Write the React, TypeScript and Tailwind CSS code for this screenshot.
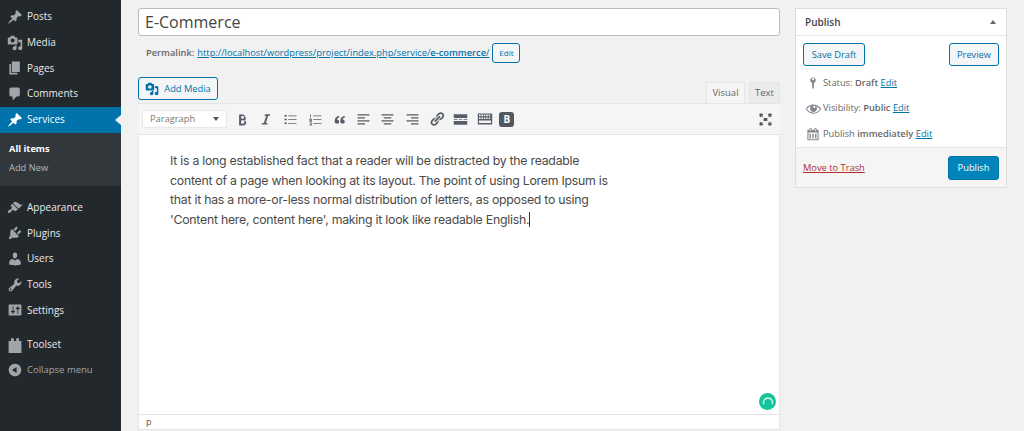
import React from "react";

const I = ({ d, c = "w-[16px] h-[16px]" }: { d: string; c?: string }) => (
  <svg viewBox="0 0 20 20" className={c} fill="currentColor"><path d={d} /></svg>
);

const P = {
  post: "M10.44 3.02l1.82-1.82 6.36 6.35-1.83 1.82c-1.05-.68-2.48-.57-3.41.36l-.75.75c-.92.93-1.04 2.35-.35 3.41l-1.83 1.82-2.41-2.41-2.8 2.79c-.42.42-3.38 2.71-3.8 2.29s1.86-3.39 2.28-3.81l2.79-2.79L4.1 9.36l1.83-1.82c1.05.69 2.48.57 3.4-.36l.75-.75c.93-.92 1.05-2.35.36-3.41z",
  media: "M13 11V4c0-.55-.45-1-1-1h-1.67L9 1H5L3.67 3H2c-.55 0-1 .45-1 1v7c0 .55.45 1 1 1h10c.55 0 1-.45 1-1zM7 4.5c1.38 0 2.5 1.12 2.5 2.5S8.38 9.5 7 9.5 4.5 8.38 4.5 7 5.62 4.5 7 4.5zM14 6h5v10.5c0 1.38-1.12 2.5-2.5 2.5S14 17.88 14 16.5s1.12-2.5 2.5-2.5c.17 0 .34.02.5.05V9h-3V6zm-4 8.05V13h2v3.5c0 1.38-1.12 2.5-2.5 2.5S7 17.88 7 16.5 8.12 14 9.5 14c.17 0 .34.02.5.05z",
  page: "M6 15V2h10v13H6zm-1 1h8v2H3V5h2v11z",
  comment: "M5 2h9c1.1 0 2 .9 2 2v7c0 1.1-.9 2-2 2h-2l-5 5v-5H5c-1.1 0-2-.9-2-2V4c0-1.1.9-2 2-2z",
  appearance: "M14.48 11.06L7.41 3.99l1.5-1.5c.5-.56 2.3-.47 3.51.32 1.21.8 1.43 1.28 2.91 2.1 1.18.64 2.45 1.26 4.45.85zm-.71.71L6.7 4.7 4.93 6.47c-.39.39-.39 1.02 0 1.41l1.06 1.06c.39.39.39 1.03 0 1.42-.6.6-1.43 1.11-2.21 1.69-.35.26-.7.53-1.01.84C1.43 13.23.4 14.84 1.4 15.84c.7.7 2.3.01 3.09-.68.24-.21.49-.46.72-.72l.02-.03c.66-.78 1.29-1.62 1.74-1.97.4-.31.88-.08 1.29.33l1.06 1.06c.39.39 1.02.39 1.41 0z",
  plugin: "M13.11 4.36L9.87 7.6 8 5.73l3.24-3.24c.35-.34 1.05-.2 1.56.32.52.51.66 1.21.31 1.55zm-8 1.77l.91-1.12 9.01 9.01-1.19.84c-.71.71-2.63 1.16-3.82 1.16H6.14L4.9 17.26c-.59.59-1.54.59-2.12 0-.59-.58-.59-1.53 0-2.12l1.24-1.24v-3.88c0-1.13.4-3.19 1.09-3.89zm7.26 3.97l3.24-3.24c.34-.35 1.04-.21 1.55.31.52.51.66 1.21.31 1.55l-3.24 3.25z",
  users: "M10 9.25c-2.27 0-2.73-3.44-2.73-3.44C7 4.02 7.82 2 9.97 2c2.16 0 2.98 2.02 2.71 3.81 0 0-.41 3.44-2.68 3.44zm0 2.57L12.72 10c2.39 0 4.52 2.33 4.52 4.53v2.49s-3.65 1.13-7.24 1.13c-3.65 0-7.24-1.13-7.24-1.13v-2.49c0-2.25 1.94-4.48 4.47-4.48z",
  tools: "M16.68 9.77c-1.34 1.34-3.3 1.67-4.95.99l-5.41 6.52c-.99.99-2.59.99-3.58 0s-.99-2.59 0-3.57l6.52-5.42c-.68-1.65-.35-3.61.99-4.95 1.28-1.28 3.12-1.62 4.72-1.06l-2.89 2.89 2.82 2.82 2.86-2.87c.53 1.58.18 3.39-1.08 4.65zM3.81 16.21c.4.39 1.04.39 1.43 0 .4-.4.4-1.04 0-1.43-.39-.4-1.03-.4-1.43 0-.39.39-.39 1.03 0 1.43z",
  settings: "M18 16V4c0-.55-.45-1-1-1H3c-.55 0-1 .45-1 1v12c0 .55.45 1 1 1h14c.55 0 1-.45 1-1zM8 11h1c.55 0 1 .45 1 1s-.45 1-1 1H8v1.5c0 .28-.22.5-.5.5s-.5-.22-.5-.5V13H6c-.55 0-1-.45-1-1s.45-1 1-1h1V5.5c0-.28.22-.5.5-.5s.5.22.5.5V11zm5-2h-1c-.55 0-1-.45-1-1s.45-1 1-1h1V5.5c0-.28.22-.5.5-.5s.5.22.5.5V7h1c.55 0 1 .45 1 1s-.45 1-1 1h-1v5.5c0 .28-.22.5-.5.5s-.5-.22-.5-.5V9z",
  toolset: "M2 5h3V1.500h3.500V5h3V1.500H15V5h3v15H2z",
  collapse: "M10 2.16c4.33 0 7.84 3.51 7.84 7.84s-3.51 7.84-7.84 7.84S2.16 14.33 2.16 10 5.71 2.16 10 2.16zm2 11.72V6.12L6.18 9.97z",
  pin: "M14 6c0-2.2-1.8-4-4-4S6 3.8 6 6c0 1.7 1.1 3.2 2.6 3.8L9 18h2l.4-8.2C12.9 9.2 14 7.7 14 6zm-4 0a1.5 1.5 0 1 1 0-3 1.5 1.5 0 0 1 0 3z",
  eye: "M18.3 9.5C15 4.9 8.5 3.8 3.9 7.2c-1.2.9-2.2 2.1-3 3.4.2.4.5.8.8 1.2 3.3 4.6 9.6 5.6 14.2 2.4.9-.7 1.7-1.4 2.4-2.4.3-.4.5-.8.8-1.2-.3-.4-.5-.8-.8-1.1zm-8.2-2.3c.5-.5 1.3-.5 1.8 0s.5 1.3 0 1.8-1.3.5-1.8 0-.5-1.3 0-1.8zm-.1 7.7c-3.1 0-6-1.6-7.7-4.2C3.5 9 5.1 7.8 7 7.2c-.7.8-1 1.7-1 2.7 0 2.2 1.7 4.1 4 4.1 2.2 0 4.1-1.7 4.1-4 0-1-.4-2-1.1-2.7 1.9.6 3.5 1.8 4.7 3.5-1.7 2.6-4.6 4.2-7.7 4.1z",
  cal: "M15 4h3v15H2V4h3V3c0-.41.15-.76.44-1.06.29-.29.65-.44 1.06-.44s.77.15 1.06.44c.29.3.44.65.44 1.06v1h4V3c0-.41.15-.76.44-1.06.29-.29.65-.44 1.06-.44s.77.15 1.06.44c.29.3.44.65.44 1.06v1zM6 3v2.5a.5.5 0 1 0 1 0V3a.5.5 0 1 0-1 0zm7 0v2.5a.5.5 0 1 0 1 0V3a.5.5 0 1 0-1 0zM3.5 8v9.5h13V8h-13zM5 9.5h2v7H5zm4 0h2v7H9zm4 0h2v7h-2z",
  bold: "M6 4v13h4.76c.96 0 1.86-.25 2.52-.77.67-.52 1.12-1.27 1.12-2.27 0-1.45-.85-2.45-2.25-2.72v-.06c1.08-.36 1.72-1.22 1.72-2.38 0-1.02-.4-1.76-1.08-2.22C12.14 4.2 11.3 4 10.4 4H6zm2.5 2h1.6c1.1 0 1.7.5 1.7 1.5 0 1-.7 1.6-1.8 1.6H8.5V6zm0 5h1.9c1.3 0 1.9.6 1.9 1.7 0 1.1-.7 2.3-1.9 2.3H8.5v-4z",
  italic: "M14.78 6h-2.13l-2.8 9h2.12l-.62 2H4.6l.62-2h2.14l2.8-9H8.03l.62-2h6.75z",
  quote: "M9.49 13.22c0-2-1.6-3.15-3-3.09.45-1.3 1.6-2.3 3-2.75V5.1C5.9 5.7 3.5 8.7 3.5 12.3c0 2.1 1.2 3.1 2.9 3.1 1.7 0 3.09-.9 3.09-2.18zm7.51 0c0-2-1.6-3.15-3-3.09.45-1.3 1.6-2.3 3-2.75V5.1c-3.6.6-6 3.6-6 7.2 0 2.1 1.2 3.1 2.9 3.1 1.7 0 3.1-.9 3.1-2.18z",
  ul: "M2 4h3v2H2zm5 .5h11v1H7zM2 9h3v2H2zm5 .5h11v1H7zM2 14h3v2H2zm5 .5h11v1H7z",
  ol: "M3 3h1v4H3zM2 8.5h3v1H3.2v.5H5v3H2v-1h2v-.5H2zM2 14h3v4H2v-1h2v-.4H3v-.8h1V15H2zM7 4.5h11v1H7zm0 5h11v1H7zm0 5h11v1H7z",
  al: "M2 3h16v1.6H2zm0 4h10v1.6H2zm0 4h16v1.6H2zm0 4h10v1.6H2z",
  ac: "M2 3h16v1.6H2zm3 4h10v1.6H5zm-3 4h16v1.6H2zm3 4h10v1.6H5z",
  ar: "M2 3h16v1.6H2zm6 4h10v1.6H8zm-6 4h16v1.6H2zm6 4h10v1.6H8z",
  link: "M17.74 2.76c1.68 1.69 1.68 4.41 0 6.1l-1.53 1.52c-1.12 1.12-2.7 1.47-4.14 1.09l2.62-2.61.76-.77.76-.76c.84-.84.84-2.2 0-3.04-.84-.85-2.2-.85-3.04 0l-.77.76-3.38 3.38c-.37-1.44-.02-3.02 1.1-4.14l1.52-1.53c1.69-1.68 4.42-1.68 6.1 0zM8.59 13.43l5.34-5.34c.42-.42.42-1.1 0-1.52-.44-.43-1.13-.39-1.53 0l-5.33 5.34c-.42.42-.42 1.1 0 1.52.44.43 1.13.39 1.52 0zm-.76 2.29l4.14-4.15c.38 1.44.03 3.02-1.09 4.14l-1.52 1.53c-1.69 1.68-4.41 1.68-6.1 0-1.68-1.68-1.68-4.42 0-6.1l1.53-1.52c1.12-1.12 2.7-1.47 4.14-1.1l-4.14 4.15c-.85.84-.85 2.2 0 3.05.84.84 2.2.84 3.04 0z",
  more: "M1 3h18v5H1zm0 6.5h5v1H1zm7 0h4v1H8zm6 0h5v1h-5zM1 12h18v5H1z",
  kitchen: "M1 3h18v14H1zm1.5 1.5v2h2v-2zm3 0v2h2v-2zm3 0v2h2v-2zm3 0v2h2v-2zm3 0v2h2v-2zM2.5 8v2h2V8zm3 0v2h2V8zm3 0v2h2V8zm3 0v2h2V8zm3 0v2h2V8zM2.5 12v3h15v-3z",
  full: "M2 2h3.5L7 3.5 5.5 5 7 6.5 6.5 7 5 5.5 3.5 7 2 5.5zm16 0v3.5L16.5 7 15 5.5 13.5 7 13 6.5 14.5 5 13 3.5 14.500 2zM2 18v-3.500L3.500 13 5 14.500 6.500 13l.5.5L5.500 15 7 16.500 5.500 18zm16 0h-3.500L13 16.500 14.500 15 13 13.500l.5-.5 1.500 1.500L16.500 13l1.500 1.500zM7.500 8h5v4h-5z",
};

const Item = ({ icon, label }: { icon: string; label: string }) => (
  <div className="flex items-center h-[25.700px] text-[#e8e9ea] text-[10px]">
    <span className="w-[27px] flex justify-center pl-[2px] text-[#a0a5aa]"><I d={icon} /></span>
    <span>{label}</span>
  </div>
);

const Sidebar = () => (
  <aside className="w-[121px] shrink-0 bg-[#23282d] h-full pt-[4px]">
    <Item icon={P.post} label="Posts" />
    <Item icon={P.media} label="Media" />
    <Item icon={P.page} label="Pages" />
    <Item icon={P.comment} label="Comments" />
    <div className="relative flex items-center h-[26px] bg-[#0073aa] text-white text-[10px]">
      <span className="w-[27px] flex justify-center pl-[2px]"><I d={P.post} /></span>
      <span>Services</span>
      <span className="absolute right-0 top-[8px] w-0 h-0 border-y-[5px] border-y-transparent border-r-[6px] border-r-[#f1f1f1]" />
    </div>
    <div className="bg-[#32373c] h-[53px] pt-[7px] text-[9.300px] pl-[9px] mb-[9px]">
      <div className="h-[18px] leading-[18px] font-bold text-white">All items</div>
      <div className="h-[20px] leading-[20px] text-[#b4b9be]">Add New</div>
    </div>
    <Item icon={P.appearance} label="Appearance" />
    <Item icon={P.plugin} label="Plugins" />
    <Item icon={P.users} label="Users" />
    <Item icon={P.tools} label="Tools" />
    <Item icon={P.settings} label="Settings" />
    <div className="h-[8.500px]" />
    <Item icon={P.toolset} label="Toolset" />
    <div className="flex items-center h-[25.700px] text-[#a0a5aa] text-[9.500px]">
      <span className="w-[27px] flex justify-center pl-[2px] text-[#a0a5aa]"><I d={P.collapse} /></span>
      <span>Collapse menu</span>
    </div>
  </aside>
);

const TB = ({ d, w = "w-[15px] h-[15px]" }: { d: string; w?: string }) => (
  <span className="w-[24.300px] flex justify-center text-[#555d66]"><I d={d} c={w} /></span>
);

const Toolbar = () => (
  <div className="h-[32px] bg-[#f5f5f5] border-y border-[#e5e5e5] flex items-center pl-[4px] pr-[7px]">
    <div className="w-[85px] h-[18px] bg-white border border-[#e8e8e8] flex items-center justify-between px-[7px] text-[9.300px] text-[#777] mr-[3px]">
      <span>Paragraph</span>
      <span className="w-0 h-0 border-x-[3.500px] border-x-transparent border-t-[4px] border-t-[#555]" />
    </div>
    <TB d={P.bold} w="w-[17px] h-[17px]" /><TB d={P.italic} w="w-[16px] h-[16px]" /><TB d={P.ul} /><TB d={P.ol} /><TB d={P.quote} />
    <TB d={P.al} /><TB d={P.ac} /><TB d={P.ar} /><TB d={P.link} w="w-[16px] h-[16px]" /><TB d={P.more} /><TB d={P.kitchen} w="w-[16px] h-[16px]" />
    <span className="ml-[2px] w-[15px] h-[15px] rounded-[3px] bg-[#50575e] text-white text-[10px] font-bold flex items-center justify-center">B</span>
    <span className="ml-auto text-[#50575e]"><I d={P.full} c="w-[15px] h-[15px]" /></span>
  </div>
);

const Btn = ({ children, cls = "" }: { children: React.ReactNode; cls?: string }) => (
  <span className={`border border-[#0073aa] rounded-[3px] bg-[#f3f5f6] text-[#0073aa] flex items-center justify-center ${cls}`}>{children}</span>
);

const Editor = () => (
  <div className="w-[642px] shrink-0 pt-[8px]">
    <div className="h-[28px] border border-[#bbbbbb] rounded-[3px] bg-white flex items-center pl-[6px] text-[16px] text-[#444]">E-Commerce</div>
    <div className="h-[20px] mt-[7px] flex items-center pl-[8px] text-[9.300px] text-[#666]">
      <span className="font-semibold mr-[3px]">Permalink:</span>
      <span className="text-[#0073aa] underline">http://localhost/wordpress/project/index.php/service/<b className="font-semibold">e-commerce</b>/</span>
      <Btn cls="ml-[3px] w-[28px] h-[20px] text-[8px]">Edit</Btn>
    </div>
    <div className="flex items-end justify-between mt-[12px] h-[28px]">
      <Btn cls="w-[80px] h-[23px] mb-[3px] text-[9.300px] gap-[5px]"><I d={P.media} c="w-[14px] h-[14px]" />Add Media</Btn>
      <div className="flex gap-[4px] text-[9.500px] text-[#666] items-end">
        <span className="w-[39px] h-[21px] flex items-center justify-center bg-[#f5f5f5] border border-b-0 border-[#e5e5e5]">Visual</span>
        <span className="w-[31px] h-[21px] flex items-center justify-center bg-[#ebebeb] border border-[#e5e5e5] border-b-0">Text</span>
      </div>
    </div>
    <Toolbar />
    <div className="relative h-[279px] bg-white border-x border-[#e5e5e5] pt-[16px] pl-[31px] text-[12.300px] leading-[19.600px] text-[#4a4a4a] font-['Inter',sans-serif] tracking-[-0.25px]">
      It is a long established fact that a reader will be distracted by the readable<br />
      content of a page when looking at its layout. The point of using Lorem Ipsum is<br />
      that it has a more-or-less normal distribution of letters, as opposed to using<br />
      'Content here, content here', making it look like readable English.<span className="border-r border-[#333]" />
      <span className="absolute right-[3px] bottom-[4px] w-[17px] h-[17px] rounded-full bg-[#15c39a] flex items-center justify-center">
        <svg viewBox="0 0 16 16" className="w-[12px] h-[12px]" fill="none" stroke="#d6f5ec" strokeWidth="1.800"><path d="M2.500 11A6 6 0 1 1 13.500 11" /></svg>
      </span>
    </div>
    <div className="h-[16px] bg-white border border-[#e5e5e5] flex items-center pl-[7px] text-[9px] text-[#555]">p</div>
  </div>
);

const Row = ({ icon, children, ic = "w-[14px] h-[14px]" }: { icon: string; children: React.ReactNode; ic?: string }) => (
  <div className="flex items-center h-[25.500px] text-[9.300px] text-[#666]">
    <span className="w-[20px] flex justify-center text-[#82878c]"><I d={icon} c={ic} /></span>
    <span>{children}</span>
  </div>
);

const EditL = () => <span className="text-[#0073aa] underline">Edit</span>;

const Publish = () => (
  <div className="w-[212px] shrink-0 mt-[8px] h-[180px] bg-white border border-[#dddddd] flex flex-col">
    <div className="h-[27px] shrink-0 border-b border-[#e5e5e5] flex items-center justify-between pl-[9px] pr-[10px] text-[10px] font-semibold text-[#444]">
      <span>Publish</span>
      <span className="w-0 h-0 border-x-[3.500px] border-x-transparent border-b-[4px] border-b-[#666]" />
    </div>
    <div className="flex justify-between pl-[7px] pr-[7px] pt-[7px] text-[9.300px]">
      <Btn cls="w-[62px] h-[23px]">Save Draft</Btn>
      <Btn cls="w-[50px] h-[23px]">Preview</Btn>
    </div>
    <div className="pl-[7px] pt-[4px] h-[81px]">
      <Row icon={P.pin}>Status: <b className="font-semibold">Draft</b> <EditL /></Row>
      <Row icon={P.eye} ic="w-[17px] h-[17px]">Visibility: <b className="font-semibold">Public</b> <EditL /></Row>
      <Row icon={P.cal}>Publish <b className="font-semibold">immediately</b> <EditL /></Row>
    </div>
    <div className="flex-1 bg-[#f5f5f5] border-t border-[#e5e5e5] flex items-center justify-between pl-[7px] pr-[7px] text-[9.300px]">
      <span className="text-[#b32d2e] underline">Move to Trash</span>
      <span className="w-[51px] h-[24px] rounded-[3px] bg-[#0085ba] border border-[#0073aa] text-white font-medium text-[9.300px] flex items-center justify-center">Publish</span>
    </div>
  </div>
);

export default function App() {
  return (
    <div className="w-[1024px] h-[431px] overflow-hidden flex bg-[#f1f1f1] font-['Open_Sans',sans-serif]">
      <Sidebar />
      <main className="flex-1 flex gap-[15px] pl-[17px]">
        <Editor />
        <Publish />
      </main>
    </div>
  );
}
